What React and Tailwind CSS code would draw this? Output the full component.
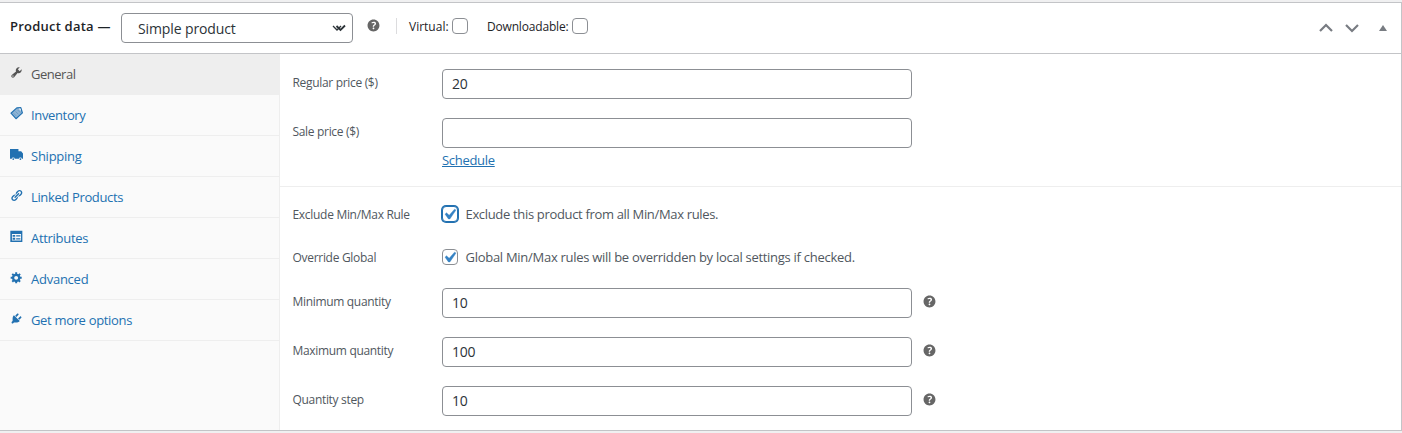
import React from "react";

const PATHS = {
  wrench:
    "M16.68 9.77c-1.34 1.34-3.3 1.67-4.95.99l-5.41 6.52c-.99.99-2.59.99-3.58 0s-.99-2.59 0-3.57l6.52-5.42c-.68-1.65-.35-3.61.99-4.95 1.28-1.28 3.12-1.62 4.72-1.06l-2.89 2.89 2.82 2.82 2.86-2.87c.53 1.58.18 3.39-1.08 4.65zM3.81 16.21c.4.39 1.04.39 1.43 0 .4-.4.4-1.04 0-1.43-.39-.4-1.03-.4-1.43 0-.39.39-.39 1.03 0 1.43z",
  truck:
    "M0 1.500h13v3.500h4.200L20 8.600V16.500h-1.700a2.300 2 0 0 0-4.600 0H7.300a2.300 2 0 0 0-4.600 0H0z M3.600 17a1.400 1.400 0 1 0 2.800 0a1.400 1.400 0 1 0-2.800 0z M14.600 17a1.400 1.400 0 1 0 2.800 0a1.400 1.400 0 1 0-2.800 0z",
  link: "M17.74 2.76c1.68 1.69 1.68 4.41 0 6.1l-1.53 1.52c-1.12 1.12-2.7 1.47-4.14 1.09l2.62-2.61.76-.77.76-.76c.84-.84.84-2.2 0-3.04-.84-.85-2.2-.85-3.04 0l-.77.76-3.38 3.38c-.37-1.44-.02-3.02 1.1-4.14l1.52-1.53c1.69-1.68 4.42-1.68 6.1 0zM8.59 13.43l5.34-5.34c.42-.42.42-1.1 0-1.52-.44-.43-1.13-.39-1.53 0l-5.33 5.34c-.42.42-.42 1.1 0 1.52.44.43 1.13.39 1.52 0zm-.76 2.29l4.14-4.15c.38 1.44.03 3.02-1.09 4.14l-1.52 1.53c-1.69 1.68-4.41 1.68-6.1 0-1.68-1.68-1.68-4.42 0-6.1l1.53-1.52c1.12-1.12 2.7-1.47 4.14-1.1l-4.14 4.15c-.85.84-.85 2.2 0 3.05.84.84 2.2.84 3.04 0z",
  attributes:
    "M.5 1h18.500v17.500H.5zM3 6v10h14V6zM4 7.500h4v3H4zM9.500 8h6.500v2H9.500zM4 12h4v3H4zM9.500 12.500h6.500v2H9.500z",
  gear: "M18 12h-2.18c-.17.7-.44 1.35-.81 1.93l1.54 1.54-2.1 2.1-1.54-1.54c-.58.36-1.23.63-1.91.79V19H8v-2.18c-.68-.16-1.33-.43-1.91-.79l-1.54 1.54-2.12-2.12 1.54-1.54c-.36-.58-.63-1.23-.79-1.91H1V9.03h2.17c.16-.7.44-1.35.8-1.94L2.43 5.55l2.1-2.1 1.54 1.54c.58-.37 1.24-.64 1.93-.81V2h3v2.18c.68.16 1.33.43 1.91.79l1.54-1.54 2.12 2.12-1.54 1.54c.36.59.64 1.24.8 1.94H18V12zm-8.5 1.5c1.66 0 3-1.34 3-3s-1.34-3-3-3-3 1.34-3 3 1.34 3 3 3z",
  plug: "M13.11 4.36L9.87 7.6 8 5.73l3.24-3.24c.35-.34 1.05-.2 1.56.32.52.51.66 1.21.31 1.55zm-8 1.77l.91-1.12 9.01 9.01-1.19.84c-.71.71-2.63 1.16-3.82 1.16H6.14L4.9 17.26c-.59.59-1.54.59-2.12 0-.59-.58-.59-1.53 0-2.12l1.24-1.24v-3.88c0-1.13.4-3.19 1.09-3.89zm7.26 3.97l3.24-3.24c.34-.35 1.04-.21 1.55.31.52.51.66 1.21.31 1.55l-3.24 3.25z",
  help: "M17 10c0-3.87-3.14-7-7-7-3.87 0-7 3.13-7 7s3.13 7 7 7c3.86 0 7-3.13 7-7zm-6.3 1.48H9.14v-.43c0-.38.08-.7.24-.98s.46-.57.88-.89c.41-.29.68-.53.81-.71.14-.18.2-.39.2-.62 0-.25-.09-.44-.28-.58-.19-.13-.45-.19-.79-.19-.58 0-1.25.19-2 .57l-.64-1.28c.87-.49 1.8-.74 2.77-.74.81 0 1.45.2 1.92.58.48.39.71.91.71 1.55 0 .43-.09.8-.29 1.11-.19.32-.57.67-1.11 1.06-.38.28-.61.49-.71.63-.1.15-.15.34-.15.57v.35zm-1.47 2.74c-.18-.17-.27-.42-.27-.73 0-.33.08-.58.26-.75s.43-.25.77-.25c.32 0 .57.09.75.26s.27.42.27.74c0 .3-.09.55-.27.72-.18.18-.43.27-.75.27-.33 0-.58-.09-.76-.26z",
  check: "M14.83 4.89l1.34.94-5.81 8.38H9.02L5.78 9.67l1.34-1.25 2.57 2.4z",
};

function Icon({ name, className }) {
  return (
    <svg viewBox="0 0 20 20" className={className} fill="currentColor" fillRule="evenodd">
      <path d={PATHS[name]} />
    </svg>
  );
}

function TagIcon({ className }) {
  return (
    <svg viewBox="0 0 13 13" className={className}>
      <path d="M1 6.200 6.800.9 10.800.7 12.400 5.900 6 11.700z" fill="#8fb4d4" stroke="#2271b1" strokeWidth="1.200" strokeLinejoin="round" />
      <path d="M8.500 1.500h2l.6 2.600z" fill="#fafafa" />
      <path d="M3.500 6.200l3 3M5.500 4.400l3 3M7.500 2.800l3 3" stroke="#5d94c2" strokeWidth=".7" />
    </svg>
  );
}

const TABS = [
  { label: "General", icon: "wrench", track: "tracking-[-0.48px]" },
  { label: "Inventory", icon: "tag", track: "tracking-[-0.35px]" },
  { label: "Shipping", icon: "truck", track: "tracking-[-0.25px]" },
  { label: "Linked Products", icon: "link", track: "tracking-[-0.36px]" },
  { label: "Attributes", icon: "attributes", track: "tracking-[-0.3px]" },
  { label: "Advanced", icon: "gear", track: "tracking-[-0.25px]" },
  { label: "Get more options", icon: "plug", track: "tracking-[-0.33px]" },
];

function Tab({ tab, active }) {
  return (
    <li
      className={`flex h-[41px] items-start border-b border-[#eee] pl-[10px] ${
        active ? "bg-[#eee] text-[#555]" : "text-[#2271b1]"
      }`}
    >
      {tab.icon === "tag" ? (
        <TagIcon className="mt-[12px] h-[13px] w-[13px] shrink-0" />
      ) : (
        <Icon name={tab.icon} className="mt-[12px] h-[13px] w-[13px] shrink-0" />
      )}
      <span className={`ml-2 mt-[11px] text-[13px] leading-[18px] ${tab.track}`}>{tab.label}</span>
    </li>
  );
}

function Checkbox({ checked, focused }) {
  return (
    <span
      className={`flex h-4 w-4 shrink-0 items-start justify-start rounded-[4px] border bg-white ${
        focused ? "border-[#2271b1] shadow-[0_0_0_1px_#2271b1]" : "border-[#8c8f94]"
      }`}
    >
      {checked && (
        <Icon name="check" className="-ml-[4px] -mt-[3px] h-[21px] w-[21px] shrink-0 stroke-[#3582c4] stroke-[0.4] text-[#3582c4]" />
      )}
    </span>
  );
}

function Field({ label, value, help, className }) {
  return (
    <div className={`flex h-[30px] items-start pl-[12.5px] ${className}`}>
      <span className="mt-[5px] w-[149.5px] text-[12px] leading-[18px] tracking-[-0.32px] text-[#50575e]">{label}</span>
      <div className="flex h-[30px] w-[470px] items-center rounded-[4px] border border-[#8c8f94] bg-white px-[9px] text-[14px] leading-[28px] tracking-[-0.2px] text-[#2c3338]">
        {value}
      </div>
      {help && <Icon name="help" className="ml-[8.5px] mt-[5px] h-[17px] w-[17px] text-[#666]" />}
    </div>
  );
}

function CheckField({ label, text, focused, track, className }) {
  return (
    <div className={`flex h-4 items-center pl-[12.5px] ${className}`}>
      <span className="mt-[2px] w-[149.5px] text-[12px] leading-[18px] tracking-[-0.3px] text-[#50575e]">{label}</span>
      <Checkbox checked focused={focused} />
      <span className={`ml-[7.5px] whitespace-nowrap text-[13px] leading-[18px] text-[#50575e] ${track}`}>{text}</span>
    </div>
  );
}

export default function App() {
  return (
    <div className="h-[433px] w-[1402px] overflow-hidden bg-[#f0f0f1] pt-[2px] font-['Open_Sans','Noto_Sans',sans-serif]">
      <section className="flex h-[429px] flex-col border-y border-r border-[#c3c4c7] bg-white">
        <header className="flex h-[51px] shrink-0 items-start border-b border-[#c3c4c7] pl-[10px] text-[#1d2327]">
          <h2 className="mt-[13px] w-[111px] whitespace-nowrap text-[13px] font-semibold leading-[20px] tracking-[0.22px]">Product data —</h2>
          <div className="mt-[10px] flex h-[30px] w-[232px] items-center rounded-[4px] border border-[#8c8f94] pl-4 text-[14px] text-[#2c3338]">
            <span className="grow font-medium tracking-[-0.12px]">Simple product</span>
            <svg viewBox="0 0 16 10" className="mr-[4px] h-[10px] w-[16px]" fill="none" stroke="#2c3338" strokeWidth="1.800">
              <path d="M1 3l4 4 4-4" strokeWidth="1.300" />
              <path d="M4.500 3l4 4 4.500-4.500" />
            </svg>
          </div>
          <Icon name="help" className="ml-[12px] mt-[14px] h-[17px] w-[17px] text-[#666]" />
          <div className="ml-[14px] mt-[15px] flex h-4 items-center border-l border-[#dcdcde] pl-[12px] text-[12px] font-medium">
            <span className="mt-[2px] w-[43px] whitespace-nowrap">Virtual:</span>
            <Checkbox />
            <span className="ml-[19px] mt-[2px] w-[85px] whitespace-nowrap tracking-[-0.18px]">Downloadable:</span>
            <Checkbox />
          </div>
          <div className="ml-auto mr-[14px] mt-[19px] flex items-center text-[#787c82]">
            <svg viewBox="0 0 14 12" className="h-[12px] w-[14px]" fill="none" stroke="currentColor" strokeWidth="2.200">
              <path d="M1 9l6-6 6 6" />
            </svg>
            <svg viewBox="0 0 14 12" className="ml-[12px] h-[12px] w-[14px]" fill="none" stroke="currentColor" strokeWidth="2.200">
              <path d="M1 3l6 6 6-6" />
            </svg>
            <svg viewBox="0 0 8 6" className="ml-[20px] h-[6px] w-[8px]" fill="currentColor">
              <path d="M0 6L4 0l4 6z" />
            </svg>
          </div>
        </header>
        <div className="flex grow">
          <ul className="w-[280px] shrink-0 border-r border-[#eee] bg-[#fafafa]">
            {TABS.map((tab, i) => (
              <Tab key={tab.label} tab={tab} active={i === 0} />
            ))}
          </ul>
          <div className="grow">
            <div className="h-[133px] border-b border-[#eee] pt-[15px]">
              <Field label="Regular price ($)" value="20" />
              <Field label="Sale price ($)" value="" className="mt-[19px]" />
              <a className="ml-[162px] mt-[3px] block w-fit text-[13px] leading-[18px] tracking-[-0.3px] text-[#2271b1] underline">
                Schedule
              </a>
            </div>
            <CheckField
              className="mt-[19px]"
              label="Exclude Min/Max Rule"
              text="Exclude this product from all Min/Max rules."
              track="tracking-[-0.33px]"
              focused
            />
            <CheckField
              className="mt-[27px]"
              label="Override Global"
              text="Global Min/Max rules will be overridden by local settings if checked."
              track="tracking-[-0.28px]"
            />
            <Field className="mt-[23px]" label="Minimum quantity" value="10" help />
            <Field className="mt-[19px]" label="Maximum quantity" value="100" help />
            <Field className="mt-[19px]" label="Quantity step" value="10" help />
          </div>
        </div>
      </section>
    </div>
  );
}
